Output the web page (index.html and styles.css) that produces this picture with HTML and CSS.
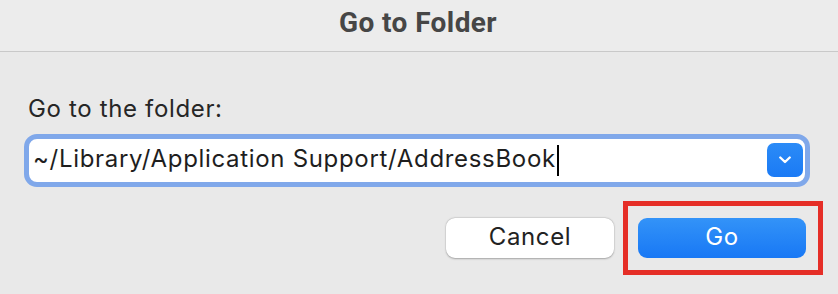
FILE: index.html
```html
<!DOCTYPE html>
<html lang="en">
<head>
<meta charset="utf-8">
<title>Go to Folder</title>
<link rel="stylesheet" href="styles.css">
</head>
<body>
<div class="dialog">
  <header class="titlebar">
    <h1 class="title">Go to Folder</h1>
  </header>
  <main class="content">
    <label class="label" for="path">Go to the folder:</label>
    <div class="field">
      <span class="path" id="path">~/Library/Application Support/AddressBook</span><span class="caret"></span>
      <span class="spacer"></span>
      <button class="dropdown" type="button" aria-label="Recent folders">
        <svg width="12" height="8" viewBox="0 0 12 8"><path d="M1.3 1.5 L6 6 L10.7 1.5" fill="none" stroke="#fff" stroke-width="2.4" stroke-linecap="round" stroke-linejoin="round"/></svg>
      </button>
    </div>
    <div class="actions">
      <button class="btn btn-cancel" type="button">Cancel</button>
      <button class="btn btn-go" type="button">Go<span class="highlight"></span></button>
    </div>
  </main>
</div>
</body>
</html>
```

FILE: styles.css
```css
html, body {
  margin: 0;
  padding: 0;
}

body {
  width: 838px;
  height: 294px;
  overflow: hidden;
  background: #e9e9e9;
  font-family: "Inter", "Noto Sans", "Liberation Sans", sans-serif;
}

.dialog {
  display: flex;
  flex-direction: column;
  height: 100%;
}

.titlebar {
  height: 52px;
  box-sizing: border-box;
  background: #ececec;
  border-bottom: 1px solid #c9c9c9;
  display: flex;
  justify-content: center;
  align-items: flex-start;
  padding-top: 9px;
  padding-right: 2px;
}

.title {
  margin: 0;
  font-family: "Roboto", "Liberation Sans", sans-serif;
  font-weight: 700;
  font-size: 28px;
  line-height: 28px;
  letter-spacing: 0.4px;
  color: #464646;
}

.content {
  padding: 43px 28px 0 24px;
  display: flex;
  flex-direction: column;
}

.label {
  display: block;
  padding-left: 4px;
  font-size: 24px;
  line-height: 28px;
  letter-spacing: 0.65px;
  color: #262626;
  margin-bottom: 11px;
}

.field {
  height: 53px;
  box-sizing: border-box;
  border: 5px solid #80a8ea;
  border-radius: 13px;
  background: #fff;
  display: flex;
  align-items: center;
  padding: 0 2px 0 4px;
}

.path {
  font-size: 24px;
  line-height: 28px;
  letter-spacing: 0.68px;
  color: #1e1e1e;
  white-space: nowrap;
  padding-bottom: 3px;
}

.caret {
  width: 2px;
  height: 31px;
  background: #000;
  margin-left: 1px;
}

.spacer {
  flex: 1;
}

.dropdown {
  width: 36px;
  height: 34px;
  border: none;
  border-radius: 7px;
  background: linear-gradient(#2b8bf7, #1a7af5);
  display: flex;
  align-items: center;
  justify-content: center;
  padding: 0;
  margin-top: -1px;
}

.actions {
  display: flex;
  justify-content: flex-end;
  gap: 24px;
  margin-top: 31px;
  padding-right: 4px;
}

.btn {
  width: 168px;
  height: 40px;
  border: none;
  border-radius: 9px;
  font-family: "Inter", "Noto Sans", "Liberation Sans", sans-serif;
  font-size: 24px;
  line-height: 28px;
  letter-spacing: 0.6px;
  padding: 0 0 2px;
}

.btn-cancel {
  background: #fff;
  color: #222;
  box-shadow: 0 0.5px 2px rgba(0, 0, 0, 0.28), 0 0 0 0.5px rgba(0, 0, 0, 0.06);
}

.btn-go {
  position: relative;
  background: linear-gradient(#3393f8, #1878f5);
  color: #fff;
}

.highlight {
  position: absolute;
  top: -17px;
  bottom: -17px;
  left: -15px;
  right: -17px;
  border: 5px solid #e52e27;
  pointer-events: none;
}
```
